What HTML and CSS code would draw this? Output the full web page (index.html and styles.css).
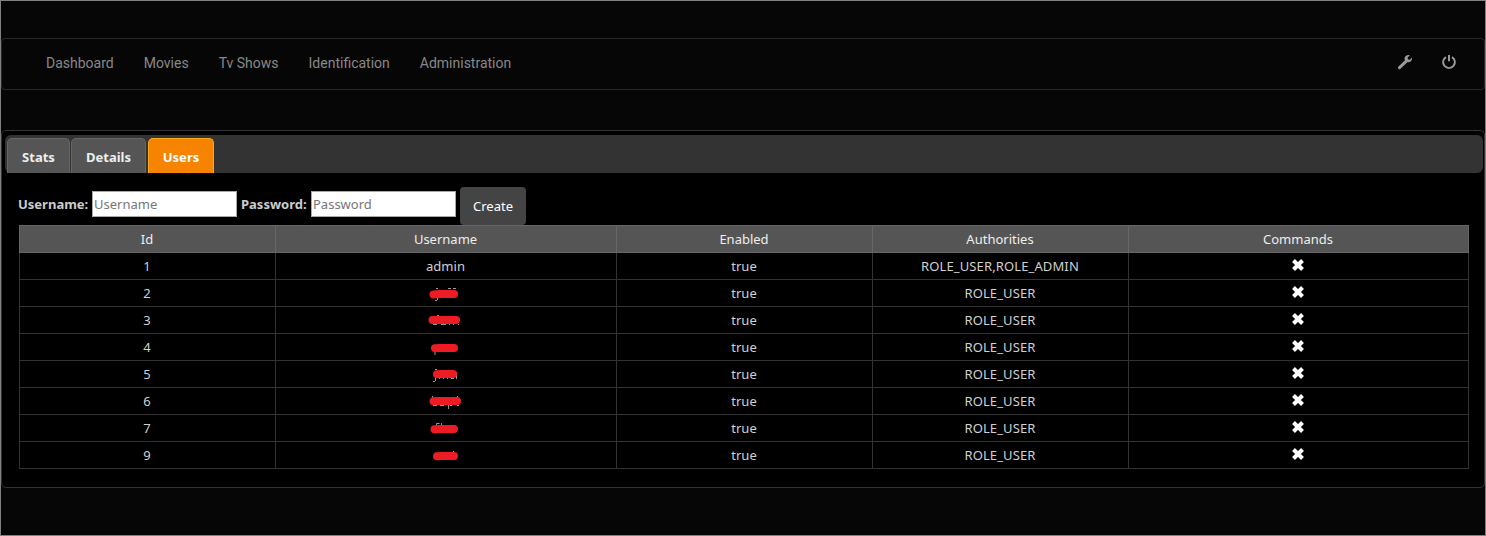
FILE: index.html
```
<!DOCTYPE html>
<html lang="en">
<head>
<meta charset="utf-8">
<title>Administration</title>
<link rel="stylesheet" href="styles.css">
</head>
<body>
<svg width="0" height="0" class="defs" aria-hidden="true">
  <symbol id="x" viewBox="0 0 12 12"><path d="M1.500 1.500 10.500 10.500M10.500 1.500 1.500 10.500" fill="none" stroke="#fff" stroke-width="4"/></symbol>
</svg>
<div class="page">
  <nav class="navbar">
    <div class="links">
      <a>Dashboard</a><a>Movies</a><a>Tv Shows</a><a>Identification</a><a>Administration</a>
    </div>
    <div class="icons">
      <svg width="14" height="14" viewBox="0 0 14 14"><path d="M1.500 12.700 8.600 5.800" fill="none" stroke="#999" stroke-width="3" stroke-linecap="round"/><path d="M11.800 0.400 9.600 2.500l.4 1.800 1.900.4L13.900 2.500c.5 2-.5 4-2.400 4.600-1.600.5-3.500-.1-4.400-1.500C6 3.700 6.500 1.700 8.100.700 9.200 0 10.600-.1 11.800.4z" fill="#999"/></svg>
      <svg width="14" height="14" viewBox="0 0 14 14"><path d="M4 2.100a5.900 5.900 0 1 0 6 0" fill="none" stroke="#999" stroke-width="1.900"/><path d="M7 0v6.300" stroke="#999" stroke-width="2"/></svg>
    </div>
  </nav>
  <main class="panel">
    <div class="tabs">
      <a class="tab t1"><span>Stats</span></a><a class="tab t2"><span>Details</span></a><a class="tab t3 active"><span>Users</span></a>
    </div>
    <form class="create">
      <label class="lu" for="u">Username:</label><input id="u" placeholder="Username">
      <label class="lp" for="p">Password:</label><input id="p" placeholder="Password">
      <button type="button">Create</button>
    </form>
    <table class="users">
      <colgroup><col class="c1"><col class="c2"><col class="c1"><col class="c1"><col class="c3"></colgroup>
      <thead><tr><th>Id</th><th>Username</th><th>Enabled</th><th>Authorities</th><th>Commands</th></tr></thead>
      <tbody>
        <tr><td>1</td><td>admin</td><td>true</td><td class="auth">ROLE_USER,ROLE_ADMIN</td><td><svg class="del"><use href="#x"/></svg></td></tr>
        <tr><td>2</td><td><svg class="mask" viewBox="0 0 40 26"><path class="bit" d="M10 8.500h2M22 8.500h3M27 8.500h3M9 20.500h2M11.500 18v2"/><path class="ink" d="M7.500 14.500 14 14h14"/></svg></td><td>true</td><td class="auth">ROLE_USER</td><td><svg class="del"><use href="#x"/></svg></td></tr>
        <tr><td>3</td><td><svg class="mask" viewBox="0 0 40 26"><path class="bit" d="M11 8.500h2M7 17.500h4M15 17.500h5M23 17.500h1M27 17.500h1M32 17.500h1"/><path class="ink" d="M6.500 13 12 13h18"/></svg></td><td>true</td><td class="auth">ROLE_USER</td><td><svg class="del"><use href="#x"/></svg></td></tr>
        <tr><td>4</td><td><svg class="mask" viewBox="0 0 40 26"><path class="bit" d="M9 17v4"/><path class="ink" d="M9 14.200 14 14h14"/></svg></td><td>true</td><td class="auth">ROLE_USER</td><td><svg class="del"><use href="#x"/></svg></td></tr>
        <tr><td>5</td><td><svg class="mask" viewBox="0 0 40 26"><path class="bit" d="M9 8.500h2M9.500 17v3M7 20.500h2M13 17.500h1M17 17.500h1M21 17.500h1M25 17.500h3M30.500 11v7"/><path class="ink" d="M11 13.200 15 13h12"/></svg></td><td>true</td><td class="auth">ROLE_USER</td><td><svg class="del"><use href="#x"/></svg></td></tr>
        <tr><td>6</td><td><svg class="mask" viewBox="0 0 40 26"><path class="bit" d="M6.500 8v3M7 17.500h4M14 17.500h4M22.500 17v4M24 17.500h2M31 17.500h2M31.500 8v2"/><path class="ink" d="M7.500 13.200 12 13h19"/></svg></td><td>true</td><td class="auth">ROLE_USER</td><td><svg class="del"><use href="#x"/></svg></td></tr>
        <tr><td>7</td><td><svg class="mask" viewBox="0 0 40 26"><path class="bit" d="M10.500 11V8.500h3M15.500 8v3"/><path class="ink" d="M8.500 14.200 13 14h15"/></svg></td><td>true</td><td class="auth">ROLE_USER</td><td><svg class="del"><use href="#x"/></svg></td></tr>
        <tr><td>9</td><td><svg class="mask" viewBox="0 0 40 26"><path class="bit" d="M27.500 9v2"/><path class="ink" d="M11 14.200 15 14h13"/></svg></td><td>true</td><td class="auth">ROLE_USER</td><td><svg class="del"><use href="#x"/></svg></td></tr>
      </tbody>
    </table>
  </main>
</div>
</body>
</html>
```
FILE: styles.css
```
* { box-sizing: border-box; }
body { margin: 0; background: #060606; color: #d0d0d0; font: 13px/20px "Noto Sans", "Open Sans", sans-serif; }
.defs { display: none; }
.page { height: 536px; border: 1px solid #808080; padding-top: 37px; }
.navbar { height: 52px; border: 1px solid #282828; border-radius: 4px; display: flex; justify-content: space-between; align-items: center; padding: 0 28px 0 44px; margin-bottom: 40px; }
.links { display: flex; gap: 30px; font: 14px/20px Roboto, sans-serif; color: #888; padding-bottom: 2px; }
.icons { display: flex; gap: 30px; padding-bottom: 4px; }
.icons svg { display: block; overflow: visible; }
.panel { height: 358px; background: #000; border: 1px solid #333; border-radius: 5px; padding: 4px 1px 0 3px; }
.tabs { height: 38px; background: #333; border-radius: 6px; display: flex; padding: 3px 0 0 2px; }
.tab { height: 35px; background: #555; border: 1px solid #666; border-bottom: 0; border-radius: 5px 5px 0 0; color: #eee; font-weight: 700; line-height: 36px; text-align: center; margin-right: 1px; }
.t1 { width: 63px; }
.t2 { width: 75px; margin-right: 2px; }
.t3 { width: 66px; }
.active { background: #f78400; border-color: #fba91b; color: #fff; }
.create { height: 52px; padding: 14px 0 0 13px; display: flex; align-items: flex-start; }
.create label { font-weight: 700; line-height: 34px; color: #ccc; white-space: nowrap; }
.lu { width: 74px; }
.lp { width: 70px; }
.create input { width: 145px; height: 26px; margin: 4px 4px 0 0; padding: 0 1px; border: 1px solid #aaa; background: #fff; font: inherit; }
.create input::placeholder { color: #777; opacity: 1; }
.create button { width: 66px; height: 38px; border: 0; border-radius: 4px; background: #444; color: #fff; font: inherit; padding: 0; }
.users { width: 1449px; margin-left: 14px; table-layout: fixed; border-collapse: collapse; text-align: center; }
.c1 { width: 256px; }
.c2 { width: 341px; }
.c3 { width: 340px; }
.users th { font-weight: 400; background: #555; border: 1px solid #666; color: #eee; }
.users td { border: 1px solid #333; }
.users th, .users td { height: 27px; padding: 0 1px 0 0; line-height: 26px; }
.users .auth { letter-spacing: 0.12px; }
.users svg { display: block; margin: 0 auto; }
.del { width: 12px; height: 12px; position: relative; top: -1px; }
.mask { width: 40px; height: 26px; }
.bit { fill: none; stroke: #999; stroke-width: 1; }
.ink { fill: none; stroke: #ed1c24; stroke-width: 8; stroke-linecap: round; stroke-linejoin: round; }
```
